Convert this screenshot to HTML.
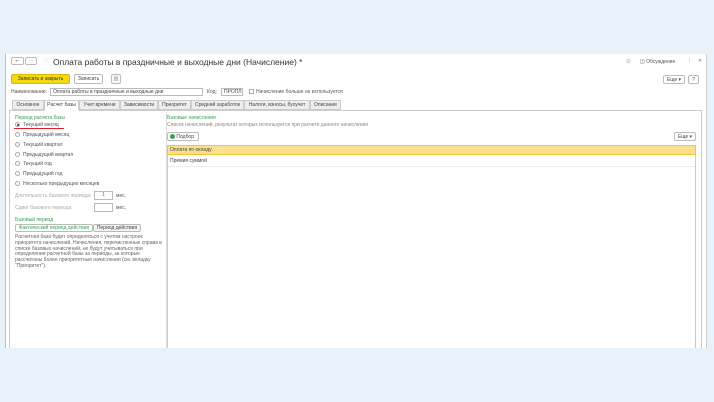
<!DOCTYPE html>
<html><head><meta charset="utf-8"><style>
*{box-sizing:border-box;margin:0;padding:0}
body{width:714px;height:402px;background:#e8f2fb;font-family:"Liberation Sans",sans-serif;position:relative;overflow:hidden;color:#444}
.a{position:absolute;white-space:nowrap}
.win{position:absolute;left:5px;top:54px;width:702px;height:294px;background:#fff;border-left:1px solid #bbb;border-right:1px solid #ccc}
.btn{position:absolute;border:1px solid #bbb;border-radius:2px;background:#f4f4f4;font-size:5px;text-align:center;line-height:8px}
.s{font-size:5px;color:#555}
.g{font-size:5px;color:#3a9d54}
.r{position:absolute;width:5px;height:5px;border:1px solid #aaa;border-radius:50%;background:#fff}
.tab{position:absolute;top:100px;height:10px;border:1px solid #ccc;background:#eee;font-size:5px;line-height:9px;text-align:center;color:#444}
.in{position:absolute;border:1px solid #bbb;background:#fff;font-size:5px;line-height:7px;padding-left:2px}
</style></head><body>
<div class="win"></div>
<div class="btn" style="left:11px;top:57px;width:13px;height:8px;background:#fff;font-size:7px;line-height:6px;color:#333">←</div>
<div class="btn" style="left:25px;top:57px;width:12px;height:8px;background:#fff;color:#bbb;font-size:7px;line-height:6px">→</div>
<div class="a" style="left:43px;top:56px;font-size:8px;color:#ddd">☆</div>
<div class="a" style="left:53px;top:57px;font-size:8.5px;color:#333">Оплата работы в праздничные и выходные дни (Начисление) *</div>
<div class="a" style="left:626px;top:58px;font-size:6px;color:#aaa">⊘</div>
<div class="a s" style="left:640px;top:59px">◫ Обсуждение</div>
<div class="a s" style="left:687px;top:58px">⋮</div>
<div class="a s" style="left:698px;top:58px;color:#777">✕</div>

<div class="btn" style="left:11px;top:74px;width:59px;height:10px;background:#f5d814;border-color:#d8bc00;color:#333;line-height:9px">Записать и закрыть</div>
<div class="btn" style="left:74px;top:74px;width:29px;height:10px;background:#fff;line-height:9px">Записать</div>
<div class="btn" style="left:111px;top:74px;width:10px;height:10px;background:#f8f8f8;color:#889;line-height:9px">▥</div>
<div class="btn" style="left:663px;top:75px;width:22px;height:9px;background:#fff">Еще ▾</div>
<div class="btn" style="left:688px;top:75px;width:11px;height:9px;background:#fff">?</div>

<div class="a s" style="left:11px;top:89px">Наименование:</div>
<div class="in" style="left:50px;top:88px;width:153px;height:8px">Оплата работы в праздничные и выходные дни</div>
<div class="a s" style="left:207px;top:89px">Код:</div>
<div class="in" style="left:221px;top:88px;width:22px;height:8px">ПРОПЛ</div>
<div class="a" style="left:249px;top:89px;width:5px;height:5px;border:1px solid #aaa"></div>
<div class="a s" style="left:256px;top:89px">Начисление больше не используется</div>

<div class="a" style="left:9px;top:110px;width:693px;height:238px;border:1px solid #ccc;border-bottom:none"></div>
<div class="tab" style="left:12px;width:32px">Основное</div>
<div class="tab" style="left:44px;width:35px;background:#fff;border-bottom-color:#fff;height:11px">Расчет базы</div>
<div class="tab" style="left:79px;width:41px">Учет времени</div>
<div class="tab" style="left:120px;width:38px">Зависимости</div>
<div class="tab" style="left:158px;width:33px">Приоритет</div>
<div class="tab" style="left:191px;width:53px">Средний заработок</div>
<div class="tab" style="left:244px;width:66px">Налоги, взносы, бухучет</div>
<div class="tab" style="left:310px;width:31px">Описание</div>

<div class="a" style="left:166px;top:112px;width:1px;height:236px;background:#ddd"></div>

<div class="a g" style="left:15px;top:115px">Период расчета базы</div>
<div class="r" style="left:15px;top:122px"></div><div class="a" style="left:17px;top:124px;width:2px;height:2px;background:#333;border-radius:50%"></div>
<div class="a s" style="left:23px;top:122px">Текущий месяц</div>
<div class="a" style="left:14px;top:128px;width:50px;height:1px;background:#e02020"></div>
<div class="r" style="left:15px;top:132px"></div><div class="a s" style="left:23px;top:132px">Предыдущий месяц</div>
<div class="r" style="left:15px;top:142px"></div><div class="a s" style="left:23px;top:142px">Текущий квартал</div>
<div class="r" style="left:15px;top:152px"></div><div class="a s" style="left:23px;top:152px">Предыдущий квартал</div>
<div class="r" style="left:15px;top:161px"></div><div class="a s" style="left:23px;top:161px">Текущий год</div>
<div class="r" style="left:15px;top:171px"></div><div class="a s" style="left:23px;top:171px">Предыдущий год</div>
<div class="r" style="left:15px;top:181px"></div><div class="a s" style="left:23px;top:181px">Несколько предыдущих месяцев</div>
<div class="a s" style="left:15px;top:193px;color:#aaa">Длительность базового периода:</div>
<div class="in" style="left:94px;top:191px;width:19px;height:9px;color:#777;text-align:right;padding-right:7px">1</div>
<div class="a s" style="left:116px;top:193px">мес.</div>
<div class="a s" style="left:15px;top:205px;color:#aaa">Сдвиг базового периода:</div>
<div class="in" style="left:94px;top:203px;width:19px;height:9px"></div>
<div class="a s" style="left:116px;top:205px">мес.</div>
<div class="a g" style="left:15px;top:217px">Базовый период</div>
<div class="btn" style="left:15px;top:224px;width:78px;height:8px;background:#fff;color:#3a9d54;line-height:7px">Фактический период действия</div>
<div class="btn" style="left:93px;top:224px;width:48px;height:8px;line-height:7px">Период действия</div>
<div class="a s" style="left:15px;top:235px;white-space:normal;width:150px;line-height:5.8px;color:#666">Расчетная база будет определяться с учетом настроек приоритета начислений. Начисления, перечисленные справа в списке базовых начислений, не будут учитываться при определении расчетной базы за периоды, за которые рассчитаны более приоритетные начисления (см. вкладку "Приоритет").</div>

<div class="a g" style="left:167px;top:115px">Базовые начисления</div>
<div class="a s" style="left:167px;top:122px;color:#888">Список начислений, результат которых используется при расчете данного начисления</div>
<div class="btn" style="left:167px;top:132px;width:32px;height:9px;background:#fff;line-height:8px;text-align:left;padding-left:2px"><span style="display:inline-block;width:5px;height:5px;border-radius:50%;background:#3a9d54;vertical-align:-1px"></span> Подбор</div>
<div class="btn" style="left:674px;top:132px;width:22px;height:9px;background:#fff">Еще ▾</div>
<div class="a" style="left:167px;top:145px;width:529px;height:203px;border:1px solid #ccc;border-bottom:none"></div>
<div class="a" style="left:167px;top:145px;width:529px;height:10px;background:#fbe18f;border:1px solid #f0c830"></div>
<div class="a s" style="left:170px;top:147px;color:#444">Оплата по окладу</div>
<div class="a s" style="left:170px;top:158px;color:#444">Премия суммой</div>
<div class="a" style="left:168px;top:166px;width:527px;height:1px;background:#eee"></div>
</body></html>
